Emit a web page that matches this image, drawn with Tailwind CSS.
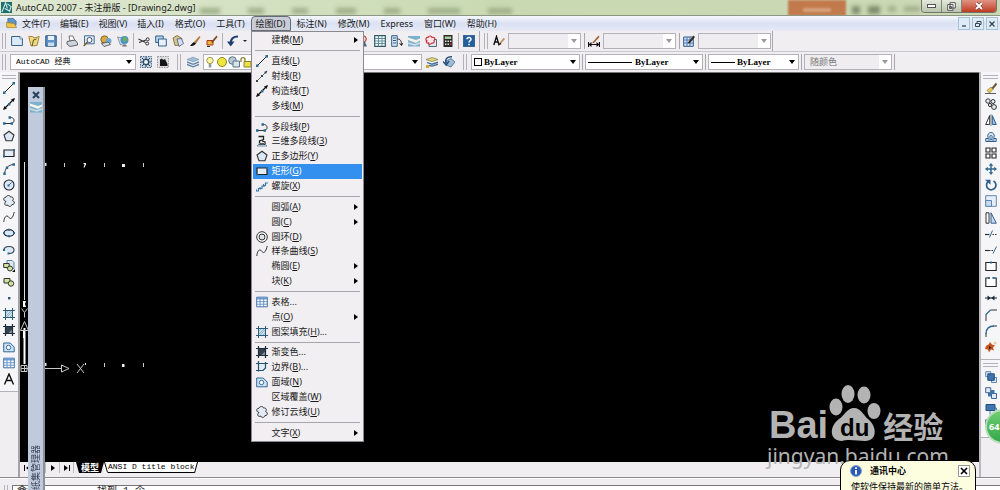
<!DOCTYPE html>
<html lang="zh-CN">
  <head>
    <meta charset="UTF-8" />
    <meta name="viewport" content="width=device-width, initial-scale=1.0" />
    <title>AutoCAD 2007 - 未注册版 - [Drawing2.dwg]</title>
    <script src="https://cdn.jsdelivr.net/npm/@tailwindcss/browser@4"></script>
  </head>
  <body class="relative flex h-screen flex-col overflow-hidden bg-[#f0eef1] font-['Noto_Sans','Noto_Sans_CJK_SC',sans-serif] text-[9px] leading-3 text-[#1a1a1a]">
    <!-- Icon set -->
    <svg class="hidden">
      <symbol id="i-line" viewBox="0 0 12 12"><path d="M1.5 10.5L10.5 1.5" stroke="#222" fill="none"/><path d="M0 9.5h2.5V12H0zM9.5 0H12v2.500H9.500z" fill="#2a6a94"/></symbol>
      <symbol id="i-ray" viewBox="0 0 12 12"><path d="M1 11L11 1" stroke="#444" stroke-width=".8"/><path d="M11.500.5L8 2l2 2zM0 10h2v2H0zM5 5h2v2H5z" fill="#345"/></symbol>
      <symbol id="i-xline" viewBox="0 0 12 12"><path d="M1 11L11 1" stroke="#111" stroke-width="1.200"/><path d="M12 0L8 1.500 10.500 4zM0 12l1.500-4L4 10.500z" fill="#111"/><path d="M5 5h2.400v2.400H5z" fill="#2a6a94"/></symbol>
      <symbol id="i-pline" viewBox="0 0 12 12"><path d="M1 9.500h8M7 3.500c5-.5 5 5.500 2 5.500" stroke="#333" fill="none"/><path d="M0 8.300h2.500v2.500H0zM7.500 8.300H10v2.500H7.500zM5.500 2.300H8v2.500H5.500z" fill="#2a6a94"/></symbol>
      <symbol id="i-3dpoly" viewBox="0 0 12 12"><path d="M2.500 1.500h5v3l-4 1.500v3h6M6 6l3 1v3" stroke="#222" stroke-width="1.300" fill="none"/><path d="M1 11l3-3M8 8l3 3M1 11h10" stroke="#6b8fae" fill="none"/></symbol>
      <symbol id="i-polygon" viewBox="0 0 12 12"><path d="M6 1.200L11 5 9 10.800H3L1 5z" fill="#dce8f6" stroke="#333" stroke-width="1.100"/></symbol>
      <symbol id="i-rect" viewBox="0 0 12 12"><path d="M1 3h10v6.500H1z" fill="#e4ecf8" stroke="#222" stroke-width="1.200"/><path d="M0 8.500h2v2H0zM10 2h2v2h-2z" fill="#2a6a94"/></symbol>
      <symbol id="i-arc" viewBox="0 0 12 12"><path d="M1.500 11C2 5.500 5 2 10.500 1.500" stroke="#333" fill="none"/><path d="M.3 9.500h2.400V12H.3zM2.800 3.500h2.400v2.400H2.800zM9.500.3H12v2.400H9.500z" fill="#2a6a94"/></symbol>
      <symbol id="i-circle" viewBox="0 0 12 12"><circle cx="6" cy="6" r="5" fill="#dce8f6" stroke="#223" stroke-width="1.100"/><path d="M5.500 6.500l3-3" stroke="#2a6a94"/><path d="M4.500 5.500h2v2h-2z" fill="#2a6a94"/></symbol>
      <symbol id="i-cloud" viewBox="0 0 12 12"><path d="M3 6.500C0 6 0 2 3 2.200 4 0 7 0 7.500 2 10.500 1.500 11 4.500 9.500 5.500 12.500 6.500 11.500 10 9 9.500 8.500 12 5.500 12 5 10 2 11.500.5 8.500 3 6.500z" fill="#e2ebf7" stroke="#333"/></symbol>
      <symbol id="i-spline" viewBox="0 0 12 12"><path d="M.8 11C1.500 4 4.500 4 6 6.500S10 7 11.200 1" fill="none" stroke="#333"/></symbol>
      <symbol id="i-ellipse" viewBox="0 0 12 12"><ellipse cx="6" cy="6" rx="5" ry="3.300" fill="#dce8f6" stroke="#223" stroke-width="1.200"/><path d="M5 1.800h2v2H5zM5 8.300h2v2H5zM0 5h2v2H0zM10 5h2v2h-2z" fill="#2a6a94"/></symbol>
      <symbol id="i-earc" viewBox="0 0 12 12"><path d="M1 6c0-5 10-4.500 10 0 0 2-2 3.500-5 3.500" fill="#dce8f6" stroke="#345" stroke-width="1.100"/><path d="M0 5h2v2H0zM4.500 8.500h2v2h-2z" fill="#2a6a94"/></symbol>
      <symbol id="i-insert" viewBox="0 0 12 12"><path d="M4 .5h5l2 2v6H4z" fill="#dce8f6" stroke="#5b83a8"/><path d="M.7 3.500h5.500v4H.7z" fill="#cfe39a" stroke="#333"/><circle cx="7" cy="8.500" r="2.500" fill="#cfe39a" stroke="#333"/><path d="M12 9v3H9z" fill="#111"/></symbol>
      <symbol id="i-block" viewBox="0 0 12 12"><path d="M1 2.500h6v4.500H1z" fill="#cfe39a" stroke="#333"/><circle cx="8" cy="7.500" r="2.700" fill="#cfe39a" stroke="#333"/></symbol>
      <symbol id="i-point" viewBox="0 0 12 12"><path d="M5 5h2.400v2.400H5z" fill="#2a5a84"/></symbol>
      <symbol id="i-hatch" viewBox="0 0 12 12"><path d="M2.500 2.500h7v7h-7z" fill="#cde2ec"/><path d="M3 5l2-2M3 8l5-5M4 9l5-5M7 9l2-2" stroke="#6fa0b4" stroke-width=".7"/><path d="M2.500 0v12M9.500 0v12M0 2.500h12M0 9.500h12" stroke="#2c5a78"/></symbol>
      <symbol id="i-gradient" viewBox="0 0 12 12"><path d="M2.500 2.500h7v7h-7z" fill="#34424e"/><path d="M5 9.500l4.500-4.500v4.500z" fill="#8795a0"/><path d="M2.500 0v12M9.500 0v12M0 2.500h12M0 9.500h12" stroke="#1c2c3a" stroke-width="1.200"/></symbol>
      <symbol id="i-boundary" viewBox="0 0 12 12"><path d="M3 3h6v3.500L6.500 9H3z" fill="#e2edf5"/><path d="M2.500 0v10.500M0 2.500h12M9.500 1v6L7 9.500H0" stroke="#24506e" stroke-width="1.200" fill="none"/></symbol>
      <symbol id="i-region" viewBox="0 0 12 12"><path d="M.7 2h6.500l4 4v4.800H.7z" fill="#cfe2f2" stroke="#2f6a98"/><circle cx="5.500" cy="6.500" r="2.200" fill="#fff" stroke="#2f6a98"/></symbol>
      <symbol id="i-table" viewBox="0 0 12 12"><path d="M.7 1.200h10.600v9.600H.7z" fill="#fff" stroke="#3f6fa8"/><path d="M1 1.500h10v2H1z" fill="#6d9ad0"/><path d="M1 5.700h10M1 8.200h10M4 2v9M7.700 2v9" stroke="#5d8cc4" stroke-width=".9"/></symbol>
      <symbol id="i-donut" viewBox="0 0 12 12"><circle cx="6" cy="6" r="5.300" fill="#fff" stroke="#333"/><circle cx="6" cy="6" r="3" fill="#dde6ee" stroke="#333"/></symbol>
      <symbol id="i-helix" viewBox="0 0 12 12"><path d="M.5 9.500v1.500h2V8.500h2v1M4 7v1.500h2V6h2v1M7.500 4v1.500h2V3H12" fill="none" stroke="#3d79a8" stroke-width="1.200"/></symbol>
      <symbol id="i-mtext" viewBox="0 0 12 12"><path d="M1.500 11.500L6 1l4.500 10.500M3.300 7.500h5.400" fill="none" stroke="#111" stroke-width="1.400"/></symbol>
      <symbol id="i-erase" viewBox="0 0 12 12"><path d="M6 6.500L11 .5l1 2-4 5z" fill="#6d5638"/><path d="M2 8.500L6 5l2 2.500L4.500 11z" fill="#f0c84a" stroke="#665" stroke-width=".6"/><path d="M0 11.500h11" stroke="#333" stroke-width=".8"/></symbol>
      <symbol id="i-copy" viewBox="0 0 12 12"><g fill="#e8eef6" stroke="#333"><circle cx="3" cy="3" r="2.200"/><circle cx="8" cy="3.500" r="2"/><circle cx="5" cy="7" r="1.600"/><circle cx="9" cy="9" r="2.400"/></g></symbol>
      <symbol id="i-mirror" viewBox="0 0 12 12"><path d="M4.700 1.500V10.500H.7z" fill="#fff" stroke="#333"/><path d="M7.300 1.500v9h4z" fill="#9fc0e0" stroke="#2f5f8c"/><path d="M6 0v12" stroke="#567" stroke-width=".7"/></symbol>
      <symbol id="i-offset" viewBox="0 0 12 12"><path d="M.8 10.500V7.500h2.700C1.800 4 3.500 1.500 6 1.500s4.200 2.500 2.500 6h2.700v3z" fill="#dce8f6" stroke="#2f5f8c"/><path d="M2.500 9h3C4.500 6 4.500 4.500 6 4.500S7.500 6 6.500 9h3" fill="none" stroke="#2f5f8c" stroke-width=".9"/></symbol>
      <symbol id="i-array" viewBox="0 0 12 12"><path d="M1 1h4v4H1zM7 1h4v4H7zM1 7h4v4H1zM7 7h4v4H7z" fill="#fff" stroke="#222" stroke-width="1.100"/></symbol>
      <symbol id="i-move" viewBox="0 0 12 12"><path d="M6 1v10M1 6h10" stroke="#356890" stroke-width="1.500"/><path d="M6 0l2.300 2.800H3.700zM6 12l2.300-2.800H3.700zM0 6l2.800-2.300v4.600zM12 6L9.200 3.700v4.600z" fill="#356890"/></symbol>
      <symbol id="i-rotate" viewBox="0 0 12 12"><path d="M3 2.700A4.700 4.700 0 1 0 8.500 2" fill="none" stroke="#2f5f8c" stroke-width="1.700"/><path d="M0 .8h5.500v5z" fill="#2f5f8c"/></symbol>
      <symbol id="i-scale" viewBox="0 0 12 12"><path d="M.7.7h10.600v10.600H.7z" fill="#e6eef8" stroke="#5f87b0"/><path d="M.7 5.500h5.800v5.800H.7z" fill="#c8daf0" stroke="#5f87b0"/></symbol>
      <symbol id="i-stretch" viewBox="0 0 12 12"><path d="M1 .8h3v10.400H1z" fill="#fff" stroke="#333"/><path d="M6 .8l5.300 10.400H6z" fill="#c8daf0" stroke="#2f5f8c"/></symbol>
      <symbol id="i-trim" viewBox="0 0 12 12"><path d="M0 6.500h4.500" stroke="#333" stroke-width="1.200"/><path d="M4.500 9.500l3-7" stroke="#2f6a98"/><path d="M7.500 6.500h4.500" stroke="#333" stroke-dasharray="1.500 1"/></symbol>
      <symbol id="i-extend" viewBox="0 0 12 12"><path d="M0 6.500h4" stroke="#333" stroke-width="1.200"/><path d="M4 6.500h4" stroke="#333" stroke-dasharray="1.500 1"/><path d="M8 9.500l3.500-7" stroke="#2f6a98"/></symbol>
      <symbol id="i-breakpt" viewBox="0 0 12 12"><path d="M.8 2.500h10.400v8H.8z" fill="#fff" stroke="#222" stroke-width="1.100"/><path d="M5 1.500h2v2H5z" fill="#2a6a94"/></symbol>
      <symbol id="i-break" viewBox="0 0 12 12"><path d="M3.500 2H.8v8.500h10.400V2H8.500" fill="#fff" stroke="#222" stroke-width="1.100"/><path d="M3 1h2v2H3zM7.500 1h2v2h-2z" fill="#2a6a94"/></symbol>
      <symbol id="i-join" viewBox="0 0 12 12"><path d="M0 6h12" stroke="#222"/><path d="M5.800 6L2.500 3.500v5zM6.200 6l3.300-2.500v5z" fill="#16283a"/></symbol>
      <symbol id="i-chamfer" viewBox="0 0 12 12"><path d="M1 12V5M5.500 1H12" stroke="#333"/><path d="M1 5.500L5.500 1" stroke="#2f6a98" stroke-width="1.300"/></symbol>
      <symbol id="i-fillet" viewBox="0 0 12 12"><path d="M1 12V8M8 1h4" stroke="#333"/><path d="M1 9c0-5 3-8 8-8" stroke="#2f6a98" stroke-width="1.400" fill="none"/></symbol>
      <symbol id="i-explode" viewBox="0 0 12 12"><path d="M1 5l3-2 1-2 2 2.500 3 1-2 2 1 3-3-1-2 3-1-3-3-.5z" fill="#c8541e"/><path d="M4 5l2.500 2L4 8z" fill="#2c1408"/><circle cx="10" cy="2" r="1.500" fill="#e8cf9a"/></symbol>
      <symbol id="i-front" viewBox="0 0 12 12"><path d="M.7.7h5v5h-5zM6.500 6.500h5v5h-5z" fill="#e0eaf5" stroke="#5f87b0"/><path d="M2.800 2.800h6.500v6.500H2.800z" fill="#3f74ac" stroke="#234e7c"/></symbol>
      <symbol id="i-back" viewBox="0 0 12 12"><path d="M3 3h6.500v6.500H3z" fill="#3f74ac"/><path d="M.7.7h5v5h-5zM6.500 6.500h5v5h-5z" fill="#e0eaf5" stroke="#3f6790"/></symbol>
      <symbol id="i-above" viewBox="0 0 12 12"><path d="M5 5h6.500v6.500H5z" fill="#e0eaf5" stroke="#5f87b0"/><path d="M1 1.500h9v6H1z" fill="#3f74ac" stroke="#234e7c"/></symbol>
      <symbol id="i-new" viewBox="0 0 12 12"><path d="M.6 1.500h8.400l2.400 2.400v6.600H.6z" fill="#dbe9f8" stroke="#33628c"/><path d="M9 1.500v2.400h2.400" fill="#fff" stroke="#33628c" stroke-width=".7"/></symbol>
      <symbol id="i-open" viewBox="0 0 12 12"><path d="M.8 1.500h4L6 3l5.200-1.500L9 10.500 3 11z" fill="#f2d77c" stroke="#8f7128" stroke-width=".8"/><path d="M4 11l1.500-6 3-1" stroke="#4c5c2c" fill="none"/></symbol>
      <symbol id="i-save" viewBox="0 0 12 12"><path d="M.8.8h10.400v10.400H.8z" fill="#5d93c6" stroke="#27527c"/><path d="M3 1h6v4H3z" fill="#e8f1fa"/><path d="M3 7.500h6V11H3z" fill="#cddcea"/></symbol>
      <symbol id="i-print" viewBox="0 0 12 12"><path d="M3 1h4l2 5H4z" fill="#fff" stroke="#555" stroke-width=".8"/><path d="M1 6.500L9 5l2.500 3v2L4 11.500l-3-2.500z" fill="#ccd4dd" stroke="#444" stroke-width=".8"/></symbol>
      <symbol id="i-preview" viewBox="0 0 12 12"><path d="M1.500.8h9.700v8H1.500z" fill="#dbe9f8" stroke="#33628c" stroke-width=".9"/><circle cx="6.500" cy="5" r="2.500" fill="#fff" stroke="#456"/><path d="M4.500 7L.8 11" stroke="#7b5a2c" stroke-width="1.500"/></symbol>
      <symbol id="i-publish" viewBox="0 0 12 12"><circle cx="4.500" cy="4.500" r="3.700" fill="#dda837" stroke="#6b5a2c" stroke-width=".8"/><circle cx="8.500" cy="6" r="3" fill="#6fa6d2"/><path d="M1.500 8.500L8 7l2.500 2.500L4 11.500z" fill="#d6dde4" stroke="#444" stroke-width=".8"/></symbol>
      <symbol id="i-globe" viewBox="0 0 12 12"><path d="M.5 2l5 1 2 5-4 2z" fill="#cfdeee" stroke="#678" stroke-width=".7"/><circle cx="7.500" cy="5" r="4" fill="#4c92c6"/><path d="M6 2.500l3-.5 1.500 3L8 7 6 6z" fill="#72ae52"/><path d="M6 9.500h3l1 2H5z" fill="#777"/></symbol>
      <symbol id="i-cut" viewBox="0 0 12 12"><path d="M.5 4l7 3.500M1 7.500L8 5" stroke="#333" stroke-width="1.100"/><circle cx="9.700" cy="4.300" r="1.500" fill="none" stroke="#333"/><circle cx="9.200" cy="8.500" r="1.500" fill="none" stroke="#333"/></symbol>
      <symbol id="i-copyclip" viewBox="0 0 12 12"><path d="M.7 1h7.500v6.500H.7z" fill="#b9d2ea" stroke="#33628c"/><path d="M3.500 4h7.800v7H3.500z" fill="#e8f1fa" stroke="#33628c"/></symbol>
      <symbol id="i-paste" viewBox="0 0 12 12"><path d="M1 3l4-2.500 5 3L8.500 10 3 10.500z" fill="#d8c58c" stroke="#6b5f3a" stroke-width=".8"/><path d="M5 4l4.500-.5 2 5L7 11.500z" fill="#cfe0f0" stroke="#557" stroke-width=".8"/></symbol>
      <symbol id="i-match" viewBox="0 0 12 12"><path d="M5 7l5.500-6 1 1L7 8.500z" fill="#b77a36"/><path d="M7 8.500C5 11 3 11 1 11c1-1 2-3 4-4z" fill="#111"/></symbol>
      <symbol id="i-blockedit" viewBox="0 0 12 12"><path d="M1 5.500h6V10H1z" fill="#f0b13c" stroke="#a8391e"/><path d="M5 7l5.500-6.500 1 1.500L6.500 8z" fill="#7b4a22"/><path d="M1 11.500h3" stroke="#333"/></symbol>
      <symbol id="i-undo" viewBox="0 0 12 12"><path d="M11 1.500C6 1.500 3.800 4 3.800 8" fill="none" stroke="#1f3f74" stroke-width="2.200"/><path d="M0 6.500h7.500L3.700 11.500z" fill="#1f3f74"/></symbol>
      <symbol id="i-zoomp" viewBox="0 0 12 12"><circle cx="6" cy="4" r="3.300" fill="#f3c9c4" stroke="#a8322c"/><path d="M5 7h3l2 4.500H5z" fill="#46668c"/></symbol>
      <symbol id="i-props" viewBox="0 0 12 12"><path d="M.7.7h10.600v10.600H.7z" fill="#fff" stroke="#2f5a66" stroke-width="1.200"/><path d="M1 3.500h10M1 6h10M1 8.500h10M4.500 1v10M8 1v10" stroke="#5c8fa0"/></symbol>
      <symbol id="i-dc" viewBox="0 0 12 12"><path d="M.7.7h5.500v10.600H.7z" fill="#dce8f6" stroke="#2f5a84"/><path d="M2 3h3M2 5.500h3M2 8h3" stroke="#2f5a84"/><path d="M6.500 4c3 0 4 2 4 6M8.500 8l2 2.500L12 8" fill="none" stroke="#222"/></symbol>
      <symbol id="i-sheets" viewBox="0 0 12 12"><path d="M0 1h12v10.500H0z" fill="#7bb0d0"/><path d="M0 2.500l8 2.500 4-1.500v2L8 8 0 5z" fill="#f4f2e6"/><path d="M0 8l7 2 5-2" stroke="#d8dfe2" stroke-width="1.500" fill="none"/></symbol>
      <symbol id="i-markup" viewBox="0 0 12 12"><path d="M4 4.500h7.500v7H4z" fill="#dce8f6" stroke="#567"/><path d="M2 6C0 5 1 2 3 2.500 4 0 7 1 7 2.500c3-1 3.500 2 2 3 1 2-1 3-2 2.500C5.500 10 3 9 3.500 8 1 8.500 1 6.500 2 6z" fill="#fbe6e8" stroke="#c92a38" stroke-width="1.100"/></symbol>
      <symbol id="i-calc" viewBox="0 0 12 12"><path d="M1.500 0h9v12h-9z" fill="#2c2a28"/><path d="M2.800 1.500h6.400V4H2.800z" fill="#a9cf9a"/><path d="M3 5.500h1.500V7H3zM5.500 5.500H7V7H5.500zM8 5.500h1.500V7H8zM3 8.500h1.500V10H3zM5.500 8.500H7V10H5.500z" fill="#ddd"/><path d="M8 8.500h1.500V10H8z" fill="#d33"/></symbol>
      <symbol id="i-help" viewBox="0 0 12 12"><path d="M.3.3h11.400v11.400H.3z" fill="#235f9c" stroke="#173f6c" stroke-width=".6"/><path d="M4 4.300C4 1.800 8.300 2 8 4.500 7.900 5.700 6 6 6 7.500M6 8.700v1.500" fill="none" stroke="#fff" stroke-width="1.500"/></symbol>
      <symbol id="i-textstyle" viewBox="0 0 12 12"><path d="M.8 10L3.500 1.500 6 10M1.700 7h3.500" fill="none" stroke="#111" stroke-width="1.400"/><path d="M6.500 8l4-5L12 4 7.500 9z" fill="#c28a4a"/><path d="M7 7.500L5 11l3.500-2z" fill="#222"/></symbol>
      <symbol id="i-dimstyle" viewBox="0 0 12 12"><path d="M.5 7v5M11.500 7v5M1 9.500h10" stroke="#111" stroke-width="1.200"/><path d="M.5 9.500L3.500 7v5zM11.500 9.500L8.500 7v5z" fill="#111"/><path d="M4 8L10.500.5l1 1.500L6 8z" fill="#9b6434"/></symbol>
      <symbol id="i-tablestyle" viewBox="0 0 12 12"><path d="M.7 2h9.600v9.300H.7z" fill="#d4e4f6" stroke="#2f5a8c"/><path d="M1 5h9M1 8h9M4 2v9M7 2v9" stroke="#4d7cb4"/><path d="M4.500 8L10.500.5 12 2 6.500 8.500z" fill="#3a2a1c"/></symbol>
      <symbol id="i-gear" viewBox="0 0 12 12"><path d="M.5.500h11v11H.5z" fill="#bccfe0" stroke="#5c6c7c" stroke-dasharray="1.500 1"/><circle cx="6" cy="6" r="2.600" fill="#eef3f8" stroke="#28465f" stroke-width="1.200"/><path d="M2 2l2 2M10 2L8 4M2 10l2-2M10 10L8 8M6 1v2M6 9v2M1 6h2M9 6h2" stroke="#28465f"/></symbol>
      <symbol id="i-wsp" viewBox="0 0 12 12"><path d="M.5.500h11v11H.5z" fill="#dcdde0" stroke="#999" stroke-dasharray="1.500 1"/><path d="M3 3.500l2-1 1 1.500 2-1 2.500 5v2H3z" fill="#161616"/></symbol>
      <symbol id="i-layers" viewBox="0 0 12 12"><path d="M0 3.500L6 1.200l6 2.300-6 2.300z" fill="#9fc0dc" stroke="#5d7f9e" stroke-width=".5"/><path d="M0 6l6 2.300L12 6M0 8.500l6 2.300 6-2.300" fill="none" stroke="#5d84aa" stroke-width="1.400"/></symbol>
      <symbol id="i-bulb" viewBox="0 0 12 12"><circle cx="6" cy="4.500" r="3.200" fill="#fdf6a0" stroke="#99904a" stroke-width=".9"/><path d="M4.700 8h2.600v3.500H4.700z" fill="#8f9aa6"/></symbol>
      <symbol id="i-sun" viewBox="0 0 12 12"><circle cx="6" cy="6" r="4.500" fill="#f1e63c" stroke="#8d8526"/></symbol>
      <symbol id="i-vp" viewBox="0 0 12 12"><circle cx="4.500" cy="4.500" r="3.800" fill="#b9c9d6" stroke="#5d7486"/><path d="M5 5h6.500v6H5z" fill="#d8e3ea" stroke="#5d7486"/></symbol>
      <symbol id="i-lock" viewBox="0 0 12 12"><path d="M1 6V3.500C1 1 5 1 5 3.500V6" fill="none" stroke="#8a8330" stroke-width="1.300"/><path d="M4 5.500h7V11H4z" fill="#eee04a" stroke="#8a8330"/></symbol>
      <symbol id="i-laycur" viewBox="0 0 12 12"><path d="M0 3.500L6 1.500l6 2-6 2z" fill="#e6d668" stroke="#5f6b52" stroke-width=".6"/><path d="M1 6.500l5 1.700 6-2M3 9.500l3 .7 6-2" fill="none" stroke="#466f94" stroke-width="1.300"/><path d="M0 9h3v3H0z" fill="#d6a92c"/></symbol>
      <symbol id="i-layprev" viewBox="0 0 12 12"><path d="M3 5l5-2.500L12 6l-4 5-5-2z" fill="#9cbcd8" stroke="#426b90" stroke-width=".8"/><path d="M9 .8C4 .5 2 3 3 7M0 5.500L3.200 9 6 5" fill="none" stroke="#26507c" stroke-width="1.500"/></symbol>
      <symbol id="i-doc" viewBox="0 0 12 12"><path d="M2 1h6l3 3v4H2z" fill="#5f93c8" stroke="#2d5a8a" stroke-width=".7"/><path d="M0 5.500l9 1L11.500 11H1z" fill="#f0c64a" stroke="#96751e" stroke-width=".7"/></symbol>
    </svg>

    <!-- Title bar -->
    <header class="relative flex h-4 shrink-0 items-start overflow-hidden border-b border-[#8d9685] bg-linear-to-r from-[#dfe8d2] via-[#c9dab2] to-[#cbd8b4]">
      <div class="absolute top-0 left-[788px] h-4 w-[58px] bg-[#c27a4d] blur-[1px]"></div>
      <div class="absolute top-2 left-[803px] h-1 w-7 bg-[#d6a27c] blur-[1px]"></div>
      <div class="absolute top-2 left-[200px] flex gap-7 blur-[2px]">
        <span class="h-1.5 w-5 bg-[#9fb08a]"></span><span class="h-1.5 w-4 bg-[#9fb08a]"></span><span class="h-1.5 w-4 bg-[#9fb08a]"></span><span class="h-1.5 w-5 bg-[#9fb08a]"></span><span class="h-1.5 w-4 bg-[#9fb08a]"></span><span class="h-1.5 w-8 bg-[#9fb08a]"></span><span class="h-1.5 w-6 bg-[#9fb08a]"></span>
      </div>
      <div class="absolute top-1.5 left-[852px] flex gap-2 blur-[2px]">
        <span class="h-2 w-2 bg-[#7f8c6c]"></span><span class="h-2 w-3 bg-[#7f8c6c]"></span><span class="h-1.5 w-2 bg-[#a3b08f]"></span><span class="h-1.5 w-4 bg-[#a3b08f]"></span>
      </div>
      <svg class="relative mt-0.5 ml-px size-[11px]" viewBox="0 0 12 12"><path d="M0 0h12v12H0z" fill="#1f6f70"/><path d="M1 11L5 1l2 6M4 7l6 3M7 2l4 3-2 6" fill="none" stroke="#d5eceb" stroke-width="1.200"/></svg>
      <h1 class="relative ml-1 pt-0.5">AutoCAD 2007 - 未注册版 - [Drawing2.dwg]</h1>
      <div class="relative mr-[3px] ml-auto flex h-[13px] overflow-hidden rounded-b border border-t-0 border-[#6f7468]">
        <button aria-label="最小化" class="flex w-5 items-center justify-center border-r border-[#80867a] bg-linear-to-b from-[#e3e9dc] to-[#bac5ae]"><span class="h-1 w-[9px] border border-[#555] bg-white"></span></button>
        <button aria-label="还原" class="flex w-5 items-center justify-center border-r border-[#80867a] bg-linear-to-b from-[#e3e9dc] to-[#bac5ae]"><svg class="size-[9px]" viewBox="0 0 9 9"><path d="M3 .7h5.300V6H3zM.7 2.500H6v5.800H.7z" fill="#fff" stroke="#555"/><path d="M2.500 4.500h2v2h-2z" fill="none" stroke="#555"/></svg></button>
        <button aria-label="关闭" class="flex w-[34px] items-center justify-center bg-linear-to-b from-[#df9384] to-[#c0371d]"><svg class="size-2" viewBox="0 0 8 8"><path d="M1 1l6 6M7 1L1 7" stroke="#5b2a22" stroke-width="3"/><path d="M1 1l6 6M7 1L1 7" stroke="#fff" stroke-width="2"/></svg></button>
      </div>
    </header>

    <!-- Menu bar -->
    <nav class="relative z-30 flex h-[15px] shrink-0 items-stretch bg-linear-to-b from-[#f6f8fd] via-[#dbe1f3] to-[#e6eaf6] pl-[6px]">
      <svg class="mt-px h-3 w-[11px]"><use href="#i-doc" /></svg>
      <div id="menubar" class="flex"></div>
      <div class="mt-px mr-0.5 ml-auto flex h-[13px] gap-0.5">
        <button aria-label="最小化窗口" class="flex w-3 items-center justify-center border border-[#a9c3d6] bg-[#dcebf5]"><svg class="size-2" viewBox="0 0 8 8"><path d="M2 6h4" stroke="#345" stroke-width="1.300"/></svg></button>
        <button aria-label="还原窗口" class="flex w-3 items-center justify-center border border-[#a9c3d6] bg-[#dcebf5]"><svg class="size-2" viewBox="0 0 8 8"><path d="M3 3V1.500h4v3H5.500M1.500 3.500h4v3h-4z" fill="none" stroke="#345"/></svg></button>
        <button aria-label="关闭窗口" class="flex w-3 items-center justify-center border border-[#a9c3d6] bg-[#dcebf5]"><svg class="size-2" viewBox="0 0 8 8"><path d="M1.500 1.500l5 5M6.500 1.500l-5 5" stroke="#345" stroke-width="1.300"/></svg></button>
      </div>
    </nav>

    <!-- Standard and styles toolbars -->
    <div class="flex h-[21px] shrink-0 items-center border-b border-[#c9c7cb]">
      <div class="flex h-full w-[480px] items-center border-r border-[#a9a7ac]">
        <span class="ml-0.5 h-4 w-1 border-x border-[#b4b2b8]"></span>
        <div class="ml-[5px] flex items-center gap-[5px]" data-icons="new open save | print preview publish globe | cut copyclip paste match blockedit | undo"></div>
        <span class="ml-1 border-x-2 border-t-2 border-x-transparent border-t-[#222]"></span>
        <div class="mr-1 ml-auto flex items-center gap-[5px]" data-icons="zoomp props dc sheets markup calc | help"></div>
      </div>
      <div class="flex h-full items-center gap-[3px] border-r border-[#a9a7ac] pr-px">
        <span class="ml-1 h-4 w-1 border-x border-[#b4b2b8]"></span>
        <div data-icons="textstyle" class="ml-0.5 flex"></div>
        <div data-combo="文字样式" class="h-4 w-[73px]" data-disabled></div>
        <span class="h-4 w-px bg-[#a9a7ac]"></span>
        <div data-icons="dimstyle" class="flex"></div>
        <div data-combo="标注样式" class="h-4 w-[73px]" data-disabled></div>
        <span class="h-4 w-px bg-[#a9a7ac]"></span>
        <div data-icons="tablestyle" class="flex"></div>
        <div data-combo="表格样式" class="h-4 w-[73px]" data-disabled></div>
      </div>
    </div>

    <!-- Workspace, layer and properties toolbars -->
    <div class="flex h-5 shrink-0 items-center">
      <span class="ml-0.5 h-4 w-1 border-x border-[#b4b2b8]"></span>
      <div data-combo="工作空间" data-value="AutoCAD 经典" class="ml-1 h-4 w-[126px]"></div>
      <div class="ml-1 flex gap-[5px]" data-icons="gear wsp"></div>
      <span class="ml-2 h-4 w-1 border-x border-[#b4b2b8]"></span>
      <div class="ml-1.5 flex" data-icons="layers"></div>
      <div class="relative ml-1 flex">
        <div data-combo="图层" class="h-4 w-[219px]"></div>
        <div class="pointer-events-none absolute top-0.5 left-px flex" data-icons="bulb sun vp lock"></div>
      </div>
      <div class="ml-1 flex gap-[5px]" data-icons="laycur layprev"></div>
      <span class="ml-2 h-4 w-1 border-x border-[#b4b2b8]"></span>
      <div data-combo="颜色控制" data-value="ByLayer" data-mark="box" class="ml-1 h-4 w-[109px]"></div>
      <span class="mx-0.5 h-4 w-px bg-[#a9a7ac]"></span>
      <div data-combo="线型控制" data-value="ByLayer" data-mark="line" class="h-4 w-[118px]"></div>
      <span class="mx-0.5 h-4 w-px bg-[#a9a7ac]"></span>
      <div data-combo="线宽控制" data-value="ByLayer" data-mark="short" class="h-4 w-[91px]"></div>
      <span class="mx-0.5 h-4 w-px bg-[#a9a7ac]"></span>
      <div data-combo="打印样式" data-value="随颜色" class="h-4 w-[88px]" data-disabled></div>
      <span class="ml-0.5 h-4 w-px bg-[#a9a7ac]"></span>
    </div>

    <!-- Work area -->
    <main class="flex min-h-0 flex-1">
      <aside class="w-5 shrink-0 border-r-2 border-[#a5a3a8]">
        <div class="border-b border-[#b4b2b8] bg-[#f6f6f8] pt-[3px] pb-1.5">
          <span class="mx-0.5 mb-[3px] block h-1 border-y border-[#b4b2b8]"></span>
          <div class="flex h-[303px] flex-col items-center justify-between" data-icons="line xline pline polygon rect arc circle cloud spline ellipse earc insert block point hatch gradient region table mtext"></div>
        </div>
      </aside>

      <section class="flex min-w-0 flex-1 flex-col">
        <div class="relative min-h-0 flex-1 border-t border-[#777] bg-black">
          <svg class="absolute top-0 left-0 h-[389px] w-[160px]" viewBox="20 73 160 389">
            <path d="M24.500 162v138" stroke="#ddd"/>
            <path d="M24.500 328v36" stroke="#fff" stroke-width="2"/>
            <path d="M64.500 163v4M104.500 163v4M143.500 163v4M104.500 363v4M143.500 363v4" stroke="#ccc"/>
            <path d="M45 163h1.500v3H45zM83 163h3v1.500l-1.500 3H83.500l1-3zM122 164h3v3h-3zM122 364h2.500v3H122zM45 363h1.500v3H45zM85 363h1v2h-1z" fill="#eee"/>
            <path d="M23 301h3l-1 3 1 3h-3zM23 330h2v8h-2z" fill="#fff"/>
            <path d="M21.500 308.500l3 4 3-4M24.500 312.500v5M20.500 330.500l4-9 4 9zM21 365.500h6v6h-6zM24.500 365v7M21 368.500h41M61.500 365l7.500 3.500-7.500 3.500zM77 364l7 9M84 364l-7 9" fill="none" stroke="#c8c8c8"/>
          </svg>
          <!-- Watermark -->
          <div class="absolute right-[30px] -bottom-[6px] z-10 w-[182px] font-bold whitespace-nowrap text-[#b3b3b3]">
            <div class="flex h-[60px] items-end pl-0.5">
              <span class="font-['Liberation_Sans',sans-serif] text-[38px] leading-[38px]">Bai</span>
              <svg class="mb-[2px] h-[57px] w-[53px] shrink-0" viewBox="0 0 53 57">
                <g fill="#b3b3b3"><ellipse cx="8" cy="22" rx="6.500" ry="8.500"/><ellipse cx="20" cy="9" rx="6.500" ry="9"/><ellipse cx="36" cy="10" rx="6.500" ry="8.500"/><ellipse cx="46" cy="26" rx="6.500" ry="8"/><path d="M26 23c7 0 9 7 14 11 9 7 10 22-3 22-6 0-17-2-23 0-13 0-13-15-3-22 6-4 8-11 15-11z"/></g>
                <text x="12" y="51" font-size="24" class="fill-black font-['Liberation_Sans',sans-serif] font-bold">du</text>
              </svg>
              <span class="ml-0.5 font-['Noto_Sans_CJK_SC',sans-serif] text-[30px] leading-[38px]">经验</span>
            </div>
            <p class="text-[21px] leading-6 font-normal">jingyan.baidu.com</p>
          </div>
        </div>
        <!-- Layout tabs -->
        <div class="flex h-[15px] shrink-0 items-start">
          <div class="flex h-[11px]">
            <button aria-label="第一个" class="flex w-3.5 items-center justify-center border-r border-[#bbb]"><svg class="size-2" viewBox="0 0 8 8"><path d="M1.500 1v6" stroke="#000"/><path d="M7 1v6L3 4z"/></svg></button>
            <button aria-label="上一个" class="w-3 border-r border-[#bbb]"></button>
            <button aria-label="下一个" class="flex w-3.5 items-center justify-center border-r border-[#bbb]"><svg class="size-2" viewBox="0 0 8 8"><path d="M2 1v6l4-3z"/></svg></button>
            <button aria-label="最后一个" class="flex w-3.5 items-center justify-center border-r border-[#bbb]"><svg class="size-2" viewBox="0 0 8 8"><path d="M1 1v6l4-3z"/><path d="M6.500 1v6" stroke="#000"/></svg></button>
          </div>
          <button class="ml-0.5 h-[11px] bg-black px-[5px] text-[9px] leading-[10px] font-bold text-white [clip-path:polygon(0_0,100%_0,calc(100%-3px)_100%,3px_100%)]">模型</button>
          <button class="flex h-[11px] items-center bg-white font-['Liberation_Mono',monospace] text-[8px] leading-[10px] text-black"><svg class="h-[11px] w-1" viewBox="0 0 4 11"><path d="M.5 0l3 10.500" stroke="#000"/></svg><span class="h-[11px] border-b border-black whitespace-nowrap">ANSI D title block</span><svg class="h-[11px] w-1 bg-[#f0eef1]" viewBox="0 0 4 11"><path d="M0 0h3.500L0 11z" fill="#fff"/><path d="M3.500 0L.5 11" stroke="#000"/></svg></button>
        </div>
      </section>

      <aside class="w-[21px] shrink-0 border-l-2 border-[#b9b7bb]">
        <div class="border-b border-[#b4b2b8] bg-[#f6f6f8] pt-[3px] pb-1.5">
          <span class="mx-0.5 mb-[3px] block h-1 border-y border-[#b4b2b8]"></span>
          <div class="flex h-[271px] flex-col items-center justify-between" data-icons="erase copy mirror offset array move rotate scale stretch trim extend breakpt break join chamfer fillet explode"></div>
        </div>
        <div class="border-b border-[#b4b2b8] bg-[#f6f6f8] pt-[3px] pb-1.5">
          <span class="mx-0.5 mb-1 block h-1 border-y border-[#b4b2b8]"></span>
          <div class="flex flex-col items-center gap-1" data-icons="front back above back"></div>
        </div>
      </aside>
    </main>

    <!-- Command line -->
    <footer class="h-[13px] shrink-0 overflow-hidden border-t border-[#8b898e]">
      <div class="flex border-t border-white pt-[6px]">
        <span class="mx-1 h-4 w-1 border-x border-[#b4b2b8]"></span>
        <div class="flex h-5 flex-1 gap-[54px] border-t border-l border-[#77757a] bg-white pl-1 font-['Liberation_Mono','Noto_Sans_CJK_SC',monospace] text-[10px] leading-[11px]"><span>命令:</span><span>找到 1 个</span></div>
      </div>
    </footer>

    <!-- Sheet set manager palette -->
    <section class="absolute top-[87px] bottom-0 left-7 z-10 flex w-[17px] flex-col items-center border-r-2 border-[#8a909c] bg-[#bfcadd]">
      <button aria-label="关闭选项板" class="mt-0.5 flex size-3 items-center justify-center"><svg class="size-2" viewBox="0 0 8 8"><path d="M1 1l6 6M7 1L1 7" stroke="#24405c" stroke-width="2"/></svg></button>
      <svg class="size-3"><use href="#i-sheets" /></svg>
      <h2 class="absolute top-[358px] rotate-180 whitespace-nowrap text-[#2f3c50] [text-orientation:sideways] [writing-mode:vertical-rl]">图纸集管理器</h2>
    </section>

    <!-- Communication center balloon -->
    <section class="absolute right-6 -bottom-3 z-20 h-[42px] w-[136px] rounded-[10px] border border-black bg-[#fdfde0] px-2.5 pt-1 whitespace-nowrap text-black">
      <div class="flex items-center gap-2">
        <svg class="-ml-px size-3" viewBox="0 0 12 12"><circle cx="6" cy="6" r="5.500" fill="#2b57b5" stroke="#8fa5d0"/><path d="M6 5v4.500M6 2.300v1.700" stroke="#fff" stroke-width="1.800"/></svg>
        <h2 class="font-bold">通讯中心</h2>
        <button aria-label="关闭通知" class="-mr-[5px] ml-auto flex size-3 items-center justify-center border border-[#999] bg-white"><svg class="size-2" viewBox="0 0 8 8"><path d="M1 1l6 6M7 1L1 7" stroke="#000" stroke-width="1.700"/></svg></button>
      </div>
      <p class="pt-1">使软件保持最新的简单方法。</p>
    </section>
    <div class="absolute top-[409px] -right-5 z-20 size-[35px] rounded-full border-2 border-[#b9dcb9] bg-linear-to-b from-[#6fce72] to-[#2fa84a] pl-0.5 leading-[31px] font-bold text-white">64</div>

    <script>
      const menus = ["文件(F)", "编辑(E)", "视图(V)", "插入(I)", "格式(O)", "工具(T)", "绘图(D)", "标注(N)", "修改(M)", "Express", "窗口(W)", "帮助(H)"];

      // label, hotkey, icon, trailing mark ("sub" opens a submenu, "..." a dialog)
      const drawMenu = [
        ["建模", "M", "", "sub"],
        null,
        ["直线", "L", "line"],
        ["射线", "R", "ray"],
        ["构造线", "T", "xline"],
        ["多线", "M"],
        null,
        ["多段线", "P", "pline"],
        ["三维多段线", "3", "3dpoly"],
        ["正多边形", "Y", "polygon"],
        ["矩形", "G", "rect"],
        ["螺旋", "X", "helix"],
        null,
        ["圆弧", "A", "", "sub"],
        ["圆", "C", "", "sub"],
        ["圆环", "D", "donut"],
        ["样条曲线", "S", "spline"],
        ["椭圆", "E", "", "sub"],
        ["块", "K", "", "sub"],
        null,
        ["表格", "", "table", "..."],
        ["点", "O", "", "sub"],
        ["图案填充", "H", "hatch", "..."],
        null,
        ["渐变色", "", "gradient", "..."],
        ["边界", "B", "boundary", "..."],
        ["面域", "N", "region"],
        ["区域覆盖", "W"],
        ["修订云线", "U", "cloud"],
        null,
        ["文字", "X", "", "sub"],
      ];

      function icon(name) {
        return `<svg class="size-3 shrink-0"><use href="#i-${name}" /></svg>`;
      }

      function menuRow(item) {
        if (!item) return `<li class="mx-0.5 flex h-1.5 items-center"><span class="h-px w-full bg-[#a8a6ab]"></span></li>`;
        const [label, key, name, mark] = item;
        const active = label === "矩形" ? "bg-[#3390ee] text-white" : "";
        return `<li class="flex flex-1">
          <button class="flex w-full items-center pl-[3px] ${active}">
            <span class="mr-1 flex w-3">${name ? icon(name) : ""}</span>
            <span>${label}${key ? `(<u>${key}</u>)` : ""}${mark === "..." ? "..." : ""}</span>
            ${mark === "sub" ? `<span class="mr-1 ml-auto border-y-3 border-l-4 border-y-transparent border-l-black"></span>` : ""}
          </button>
        </li>`;
      }

      document.getElementById("menubar").innerHTML = menus
        .map((label, i) => {
          if (label !== "绘图(D)") return `<button class="px-[5px] ${i > 2 ? "mr-px" : ""}">${label}</button>`;
          return `<div class="relative mr-px flex">
            <button class="rounded-t-sm border border-[#666b78] bg-[#c9ccd6] px-1">${label}</button>
            <ul class="absolute top-full left-0 flex h-[411px] w-[113px] flex-col border border-[#8b898e] bg-[#f1eff2] px-px py-px">${drawMenu.map(menuRow).join("")}</ul>
          </div>`;
        })
        .join("");

      document.querySelectorAll("[data-icons]").forEach((bar) => {
        bar.innerHTML = bar.dataset.icons
          .split(" ")
          .map((name) =>
            name === "|"
              ? `<span class="-mx-px h-4 w-px bg-[#b4b2b8]"></span>`
              : `<button class="flex" aria-label="${name}">${icon(name)}</button>`
          )
          .join("");
      });

      // Lead-in shown before the value: colour swatch or line sample
      const marks = {
        box: `<span class="absolute left-[3px] size-2 border border-black"></span>`,
        line: `<span class="absolute left-[3px] h-px w-11 bg-black"></span>`,
        short: `<span class="absolute left-[3px] h-px w-6 bg-black"></span>`,
      };
      const indents = { box: "pl-3", line: "pl-[49px]", short: "pl-7" };

      document.querySelectorAll("[data-combo]").forEach((el) => {
        const { combo, value = "", mark } = el.dataset;
        const off = "disabled" in el.dataset;
        const family = value === "ByLayer" ? "font-['Liberation_Serif',serif] font-bold" : value.startsWith("Auto") ? "font-['Liberation_Mono','Noto_Sans_CJK_SC',monospace] text-[8px]" : "";
        el.innerHTML = `<label class="relative flex h-full w-full items-center">
          <select aria-label="${combo}" ${off ? "disabled" : ""} class="h-full w-full appearance-none border border-[#b4b2b8] ${off ? "bg-[#efedf0] text-[#777] opacity-100" : "bg-white text-black"} ${indents[mark] || "pl-[5px]"} ${family}"><option>${value}</option></select>
          ${marks[mark] || ""}
          <span class="pointer-events-none absolute right-px flex h-3.5 w-3 items-center justify-center bg-white"><span class="border-x-3 border-t-4 border-x-transparent ${off ? "border-t-[#999]" : "border-t-black"}"></span></span>
        </label>`;
      });
    </script>
  </body>
</html>
